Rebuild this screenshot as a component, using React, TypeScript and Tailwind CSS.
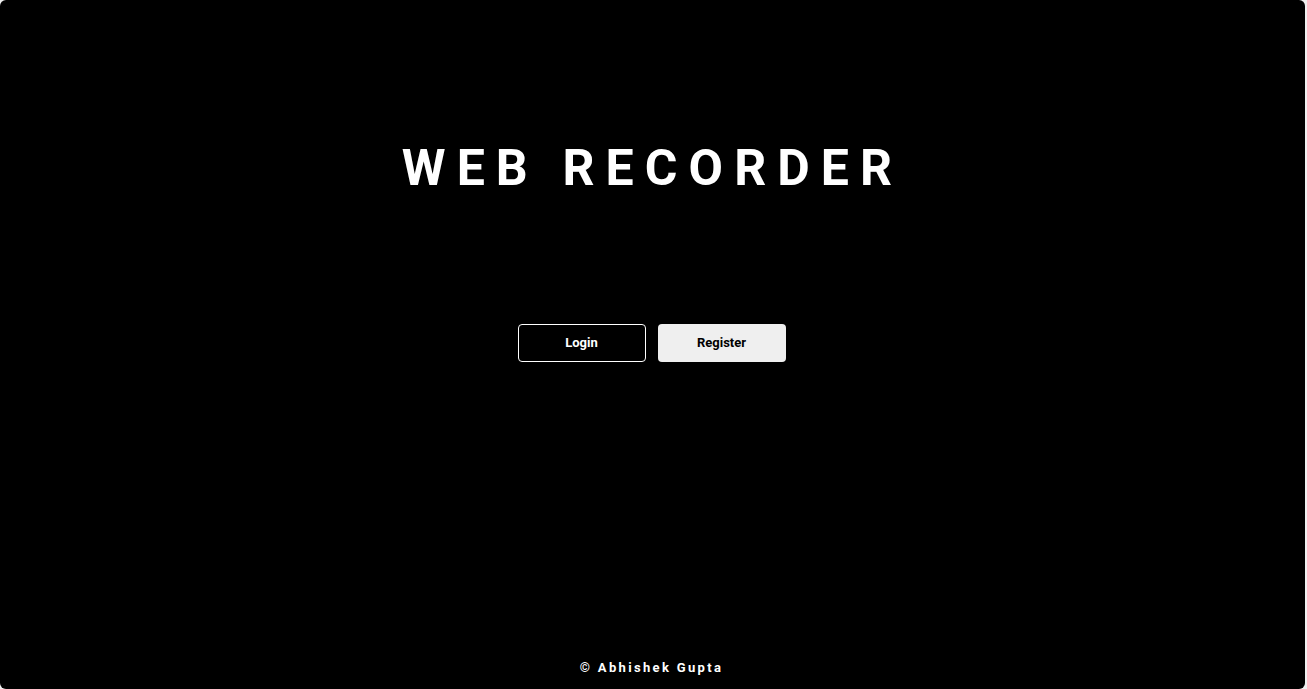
export default function App() {
  return (
    <div className="h-[689px] w-full bg-[#f0f0f0] font-['Roboto',sans-serif]">
      <div className="flex h-full w-[1305px] flex-col items-center rounded-md bg-black text-white">
        <h1 className="mt-[143px] text-[50px] font-bold leading-none tracking-[0.222em]">
          WEB RECORDER
        </h1>

        <div className="mt-[131px] mr-[2px] flex gap-3">
          <button className="h-[38px] w-[128px] rounded border border-white bg-black text-[13px] font-bold text-white">
            Login
          </button>
          <button className="h-[38px] w-[128px] rounded bg-[#efefef] text-[13px] font-bold text-black">
            Register
          </button>
        </div>

        <footer className="mt-auto mb-[12px] mr-[2px] text-[13px] font-bold tracking-[0.18em]">
          © Abhishek Gupta
        </footer>
      </div>
    </div>
  )
}
